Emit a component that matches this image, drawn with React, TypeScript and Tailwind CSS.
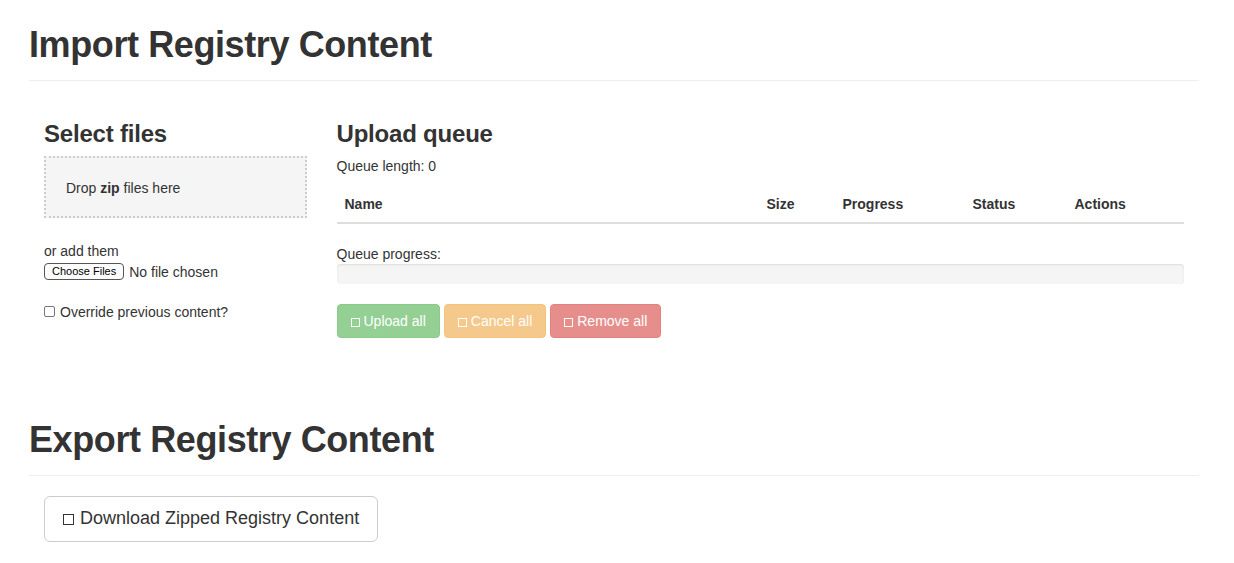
import React from "react";

const Square = ({ className = "" }: { className?: string }) => (
  <span className={`inline-block border border-current align-[-1px] ${className}`} />
);

function PageHeader({ title }: { title: string }) {
  return (
    <div className="border-b border-[#eee] pb-[9px] mb-5">
      <h1 className="mt-[25px] mb-[6px] text-[36px] leading-[1.1] font-bold tracking-[-0.4px] text-[#333]">
        {title}
      </h1>
    </div>
  );
}

function QueueButton({ label, color }: { label: string; color: string }) {
  return (
    <button
      type="button"
      disabled
      className={`${color} opacity-65 text-white text-sm leading-5 px-[13px] py-1.5 rounded border cursor-not-allowed`}
    >
      <Square className="w-[9px] h-[9px] mr-1" />
      {label}
    </button>
  );
}

export default function App() {
  const columns = [
    { name: "Name", width: "w-[422px]" },
    { name: "Size", width: "w-[76px]" },
    { name: "Progress", width: "w-[130px]" },
    { name: "Status", width: "w-[102px]" },
    { name: "Actions", width: "" },
  ];

  return (
    <div
      className="bg-white text-[#333] text-sm leading-5 min-h-[563px]"
      style={{ fontFamily: '"Liberation Sans", Arial, sans-serif' }}
    >
      <div className="ml-[29px] w-[1170px]">
        <PageHeader title="Import Registry Content" />

        <div className="flex">
          <div className="w-[292.5px] px-[15px]">
            <h3 className="mt-[20px] mb-[9px] text-2xl leading-[1.1] font-bold tracking-[-0.2px]">Select files</h3>
            <div className="border-2 border-dotted border-[#ccc] bg-[#f5f5f5] px-5 py-5 h-[62px]">
              Drop <b>zip</b> files here
            </div>
            <div className="mt-[23px]">or add them</div>
            <div className="flex items-center h-[20px] mt-[1px]">
              <span className="inline-flex items-center h-[17px] px-[7px] border border-[#555] rounded-[4px] text-[11px] leading-none text-black bg-[#fdfdfd]">
                Choose Files
              </span>
              <span className="ml-[5px]">No file chosen</span>
            </div>
            <label className="flex items-center mt-[20px]">
              <span className="inline-block w-[11px] h-[11px] border border-[#777] rounded-[2px] bg-white mr-[5px]" />
              Override previous content?
            </label>
          </div>

          <div className="w-[877.5px] px-[15px]">
            <h3 className="mt-[20px] mb-[9px] text-2xl leading-[1.1] font-bold tracking-[-0.2px]">Upload queue</h3>
            <p className="mb-2.5">Queue length: 0</p>
            <table className="w-full mb-5 border-collapse">
              <thead>
                <tr>
                  {columns.map((c) => (
                    <th
                      key={c.name}
                      className={`${c.width} text-left font-bold p-2 border-b-2 border-[#ddd]`}
                    >
                      {c.name}
                    </th>
                  ))}
                </tr>
              </thead>
            </table>
            <div>
              <div>Queue progress:</div>
              <div className="h-5 mb-5 bg-[#f5f5f5] rounded shadow-[inset_0_1px_2px_rgba(0,0,0,0.1)]" />
            </div>
            <div className="flex gap-1">
              <QueueButton label="Upload all" color="bg-[#5cb85c] border-[#4cae4c]" />
              <QueueButton label="Cancel all" color="bg-[#f0ad4e] border-[#eea236]" />
              <QueueButton label="Remove all" color="bg-[#d9534f] border-[#d43f3a]" />
            </div>
          </div>
        </div>

        <div className="mt-[82px]">
          <PageHeader title="Export Registry Content" />
        </div>
        <div className="px-[15px]">
          <button
            type="button"
            className="text-lg leading-[1.3333] px-[18px] py-2.5 border border-[#ccc] rounded-md bg-white text-[#333]"
          >
            <Square className="w-[11px] h-[11px] mr-[6px]" />
            Download Zipped Registry Content
          </button>
        </div>
      </div>
    </div>
  );
}
